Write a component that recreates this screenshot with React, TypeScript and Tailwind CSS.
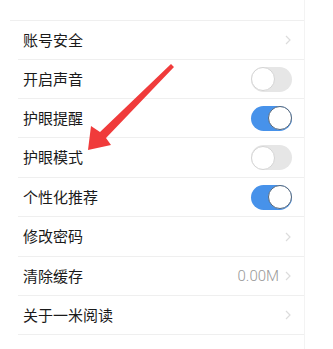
import React from "react"

type Item = {
    label: string
    kind: "link" | "on" | "off"
    extra?: string
    h: string
}

const items: Item[] = [
    { label: "账号安全", kind: "link", h: "h-[39px]" },
    { label: "开启声音", kind: "off", h: "h-[39px]" },
    { label: "护眼提醒", kind: "on", h: "h-[39px]" },
    { label: "护眼模式", kind: "off", h: "h-[40px]" },
    { label: "个性化推荐", kind: "on", h: "h-[39px]" },
    { label: "修改密码", kind: "link", h: "h-[40px]" },
    { label: "清除缓存", kind: "link", extra: "0.00M", h: "h-[39px]" },
    { label: "关于一米阅读", kind: "link", h: "h-[39px]" },
]

function Chevron() {
    return (
        <svg width="6" height="10" viewBox="0 0 6 10" className="ml-[6px]">
            <polyline points="1,1 5,5 1,9" fill="none" stroke="#dcdcdc" strokeWidth="1.2" />
        </svg>
    )
}

function Toggle({ on }: { on: boolean }) {
    if (on) {
        return (
            <div className="w-[41px] h-[25px] rounded-full bg-[#4792ea] flex items-center justify-end mr-[12px]">
                <div className="w-[24px] h-[24px] rounded-full bg-white border border-[#56677a]" />
            </div>
        )
    }
    return (
        <div className="w-[41px] h-[25px] rounded-full bg-[#e6e6e6] flex items-center mr-[12px]">
            <div className="w-[24px] h-[24px] rounded-full bg-white border border-[#d4d4d4]" />
        </div>
    )
}

function Row({ item }: { item: Item }) {
    return (
        <div className={`${item.h} ml-[18px] pl-[5px] border-b border-[#efefef] flex items-center justify-between`}>
            <span className="text-[15px] text-[#1a1a1a]">{item.label}</span>
            {item.kind === "link" ? (
                <div className="flex items-center mr-[13px]">
                    {item.extra && (
                        <span className="text-[15px] text-[#999] font-light font-['Roboto',sans-serif]">{item.extra}</span>
                    )}
                    <Chevron />
                </div>
            ) : (
                <Toggle on={item.kind === "on"} />
            )}
        </div>
    )
}

export default function App() {
    return (
        <div className="relative w-[333px] h-[349px] bg-white overflow-hidden flex font-['Noto_Sans_CJK_SC','Noto_Sans',sans-serif]">
            <div className="w-[305px] border-r border-[#f3f3f3]">
                <div className="h-[21px] border-b border-[#efefef] ml-[10px]" />
                {items.map((it) => (
                    <Row key={it.label} item={it} />
                ))}
            </div>
            <div className="flex-1 bg-white" />
            <svg className="absolute left-0 top-0" width="333" height="349" viewBox="0 0 333 349">
                <polygon
                    points="88,150 91,126 100,132 171,64 174,67 106,138 111,145"
                    fill="#f03b3b"
                />
            </svg>
        </div>
    )
}
